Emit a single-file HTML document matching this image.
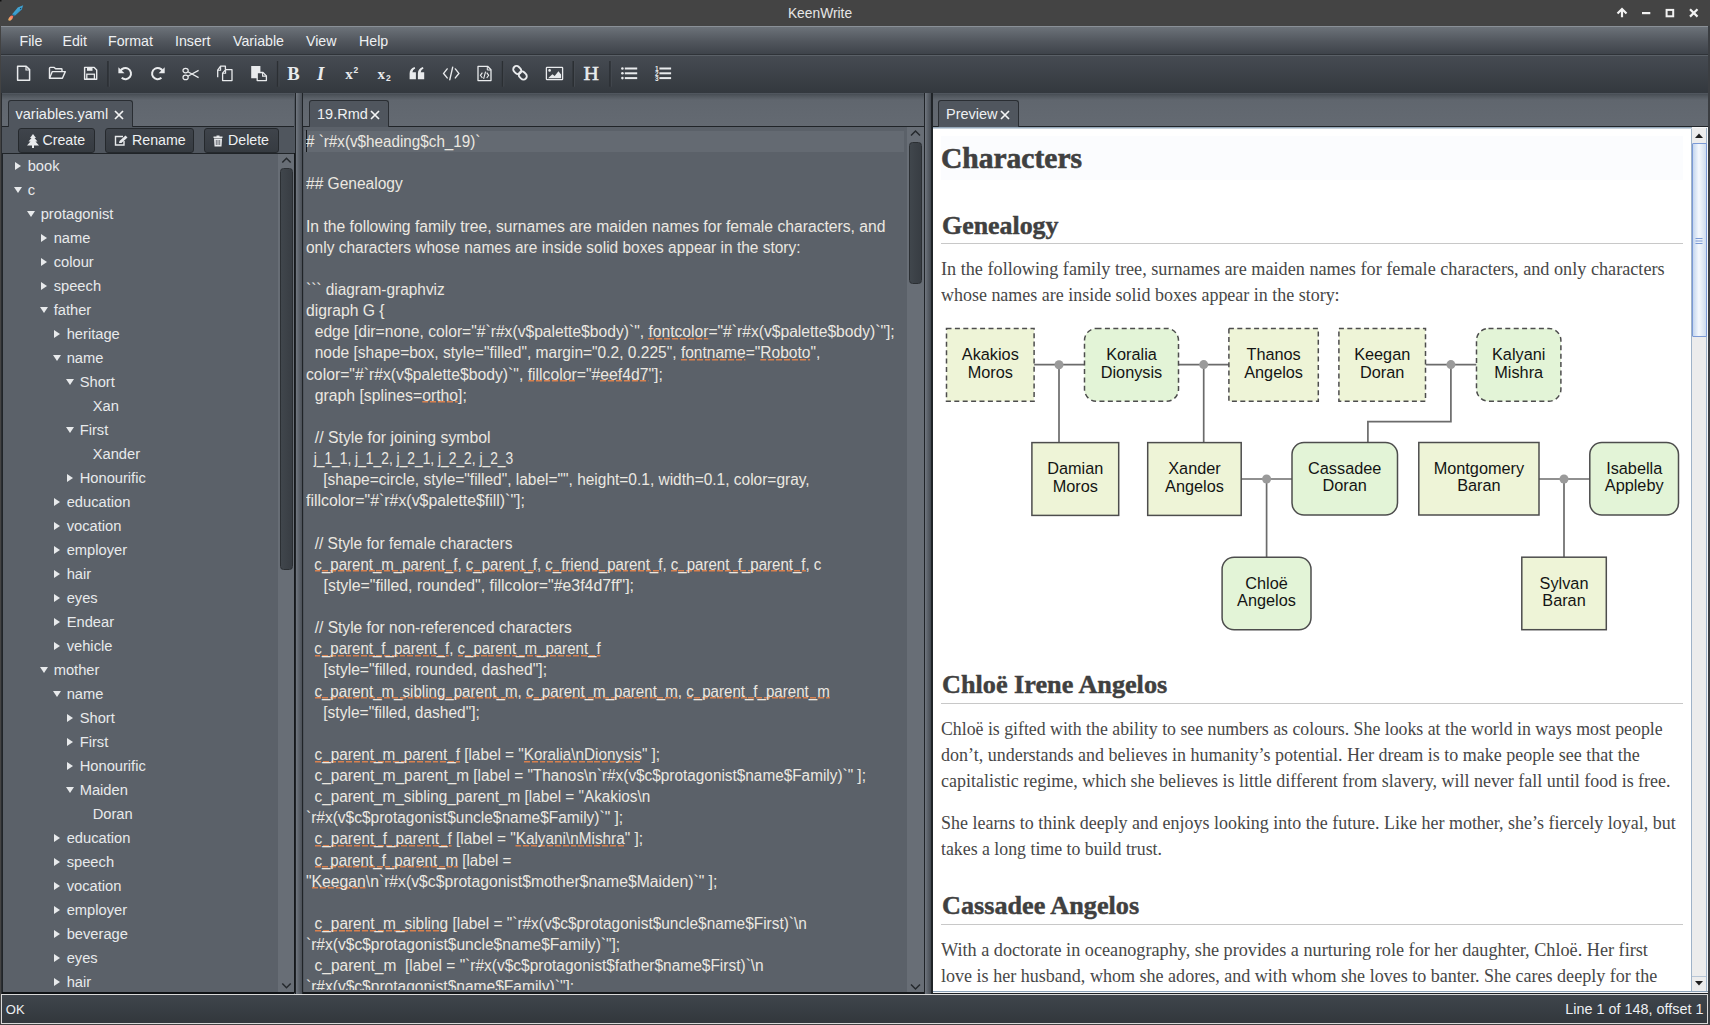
<!DOCTYPE html>
<html><head><meta charset="utf-8">
<style>
*{margin:0;padding:0;box-sizing:border-box}
html,body{width:1710px;height:1025px;overflow:hidden;background:#434343;font-family:"Liberation Sans",sans-serif}
.a{position:absolute}
#title{left:0;top:0;width:1710px;height:26px;background:#444444}
#title .t{left:0;width:1640px;top:5.5px;text-align:center;color:#e6e6e6;font-size:13.8px;line-height:16px}
#menubar{left:1px;top:26px;width:1707px;height:29px;background:linear-gradient(#8a9097 0px,#8a9097 1px,#6b7178 1.5px,#52575e 15px,#3e434a 28px);border-bottom:1px solid #2f3338}
#menubar span{position:absolute;top:7px;color:#eef0f2;font-size:14.2px;line-height:16px}
#toolbar{left:1px;top:55px;width:1707px;height:39px;background:linear-gradient(#464b52,#33383e);border-top:1px solid #5a6067;border-bottom:1px solid #1e2125}
.sep{position:absolute;top:6px;width:2px;height:26px;background:#2c3035;border-right:1px solid #4a4f55}
.ico{position:absolute}
/* panes */
.hdr{position:absolute;top:94px;height:33px;background:linear-gradient(#474d54 0px,#51575e 2px,#60666e 6px,#646a72 33px)}
.tab{position:absolute;top:100px;height:27px;background:#50565e;border:1.5px solid #2a2e33;border-bottom:none;border-radius:3px 3px 0 0;color:#eef0f2;font-size:14.5px;line-height:16px}
.tab .tx{position:absolute;top:5px;left:7px;white-space:nowrap}
.tab .x{position:absolute;top:8.6px;width:10px;height:10px}
#status{left:1px;top:994px;width:1707px;height:30px;background:linear-gradient(#3f454c,#32373c);border:1px solid #d9d9d9}
#status span{position:absolute;top:6px;color:#eef0f2;font-size:14.4px;line-height:16px}

.pane{position:absolute;top:93px;background:#50565e}
.split{position:absolute;top:93px;height:901px;width:7px;background:linear-gradient(90deg,#717780,#5d636b 40%,#454a51)}
.bdr{position:absolute;background:#202428}
.btn{position:absolute;top:127.5px;height:25px;background:linear-gradient(#3f444b,#363b41);border:1px solid #25292d;border-radius:3px;color:#eef0f2;font-size:14.2px;line-height:16px}
.btn span{position:absolute;top:3px;white-space:nowrap}
.tree{position:absolute;left:3px;top:154px;width:291px;height:838px;background:#5b6169}
.tree div{position:absolute;color:#e8eaec;font-size:14.7px;line-height:16px;white-space:nowrap}
.tri-r{position:absolute;width:0;height:0;border-left:6.4px solid #e8eaec;border-top:4.7px solid transparent;border-bottom:4.7px solid transparent}
.tri-d{position:absolute;width:0;height:0;border-top:6.4px solid #e8eaec;border-left:4.6px solid transparent;border-right:4.6px solid transparent}
.sbtrack{position:absolute;background:#646a72}
.sbthumb{position:absolute;background:linear-gradient(90deg,#3a3f45,#454a51 50%,#3a3f45);border:1px solid #2a2e32;border-radius:4px}
#editor div{position:absolute;left:2px;transform-origin:0 0;white-space:pre;color:#ebe8e1;font-size:15.6px;line-height:20px}
#editor u{text-decoration:none;background:repeating-linear-gradient(90deg,#d8804e 0 6px,transparent 6px 8px) 0 calc(100% - 0.9px)/100% 1.5px no-repeat}
#preview .h1,#preview .h2,#preview .p{position:absolute;white-space:nowrap;transform-origin:0 0;font-family:"Liberation Serif",serif;color:#404040}
#preview .h1{font-size:29px;font-weight:bold;line-height:34.8px;-webkit-text-stroke:0.6px #404040}
#preview .h2{font-size:26px;font-weight:bold;line-height:31.2px;-webkit-text-stroke:0.45px #404040}
#preview .p{font-size:18px;line-height:21.6px;color:#474747}
#preview svg text{font-family:"Liberation Sans",sans-serif;font-size:16.3px;fill:#141414}
</style></head><body>
<div id="title" class="a"><div class="a t">KeenWrite</div></div>
<div id="menubar" class="a">
<span style="left:18.5px">File</span><span style="left:61.5px">Edit</span><span style="left:107px">Format</span><span style="left:174px">Insert</span><span style="left:232px">Variable</span><span style="left:305px">View</span><span style="left:358px">Help</span>
</div>
<div id="toolbar" class="a"></div><svg class="a" style="left:0;top:55px" width="700" height="38" viewBox="0 55 700 38"><rect x="107.2" y="61" width="1.6" height="25.7" fill="#2b2f33"/><rect x="108.8" y="61" width="0.8" height="25.7" fill="#484d53"/><rect x="276.9" y="61" width="1.6" height="25.7" fill="#2b2f33"/><rect x="278.5" y="61" width="0.8" height="25.7" fill="#484d53"/><rect x="501.8" y="61" width="1.6" height="25.7" fill="#2b2f33"/><rect x="503.40000000000003" y="61" width="0.8" height="25.7" fill="#484d53"/><rect x="572.5" y="61" width="1.6" height="25.7" fill="#2b2f33"/><rect x="574.0999999999999" y="61" width="0.8" height="25.7" fill="#484d53"/><rect x="609.2" y="61" width="1.6" height="25.7" fill="#2b2f33"/><rect x="610.8" y="61" width="0.8" height="25.7" fill="#484d53"/><path d="M17.6 66.2H26.2L29.6 69.6V80.3H17.6Z" stroke="#e9ebed" fill="none" stroke-width="1.5" stroke-linejoin="round"/><path d="M26 66.2V70H29.6" stroke="#e9ebed" fill="none" stroke-width="1.2"/><path d="M49.5 78.3V68.2Q49.5 67.4 50.3 67.4H54.2L55.6 68.8H61.3Q62 68.8 62 69.5V71.4" stroke="#e9ebed" fill="none" stroke-width="1.4" stroke-linejoin="round"/><path d="M49.5 78.3L52.3 71.6H65.3L62.4 78.3Z" stroke="#e9ebed" fill="none" stroke-width="1.4" stroke-linejoin="round"/><path d="M84.6 67.4H94.2L96.7 69.9V79.3H84.6Z" stroke="#e9ebed" fill="none" stroke-width="1.4" stroke-linejoin="round"/><rect x="87" y="67.4" width="5.5" height="3.4" fill="#e9ebed"/><rect x="86.8" y="74.2" width="7.6" height="5" stroke="#e9ebed" fill="none" stroke-width="1.3"/><path d="M120.3 71.3A5.6 5.6 0 1 1 121.7 77.8" stroke="#e9ebed" fill="none" stroke-width="2"/><path d="M118.4 67.2V73.3H124.5Z" fill="#e9ebed"/><path d="M162.8 71.3A5.6 5.6 0 1 0 161.4 77.8" stroke="#e9ebed" fill="none" stroke-width="2"/><path d="M164.7 67.2V73.3H158.6Z" fill="#e9ebed"/><ellipse cx="185.6" cy="70.6" rx="2.6" ry="2.2" stroke="#e9ebed" fill="none" stroke-width="1.2"/><ellipse cx="185.6" cy="77.4" rx="2.6" ry="2.2" stroke="#e9ebed" fill="none" stroke-width="1.2"/><path d="M187.8 71.8L198.6 77.6M187.8 76.2L198.6 70.4" stroke="#e9ebed" fill="none" stroke-width="1.2"/><path d="M217.7 77.3V70.2L220.6 66.2H225.4V69.2" stroke="#e9ebed" fill="none" stroke-width="1.3" stroke-linejoin="round"/><path d="M217.7 70.2H220.6V66.2" stroke="#e9ebed" fill="none" stroke-width="1.1"/><path d="M222.6 80.6V73.2L225.6 69.7H232V80.6Z" stroke="#e9ebed" fill="none" stroke-width="1.3" stroke-linejoin="round"/><path d="M222.6 73.2H225.6V69.7" stroke="#e9ebed" fill="none" stroke-width="1.1"/><path d="M251.2 66H260.4V72.5H257.2V78.3H251.2Z" fill="#e9ebed"/><path d="M257.2 80.6V72.5H263L266.4 75.9V80.6Z" stroke="#e9ebed" fill="none" stroke-width="1.3" stroke-linejoin="round"/><path d="M262.6 72.5V76.1H266.4" stroke="#e9ebed" fill="none" stroke-width="1.1"/><text x="287.3" y="79.9" font-family="Liberation Serif" font-weight="bold" font-size="18.6" fill="#e9ebed">B</text><text x="317" y="79.9" font-family="Liberation Serif" font-style="italic" font-weight="bold" font-size="18.6" fill="#e9ebed">I</text><text x="583.6" y="80" font-family="Liberation Serif" font-size="19.5" font-weight="normal" stroke="#e9ebed" stroke-width="0.5" fill="#e9ebed" textLength="15.4" lengthAdjust="spacingAndGlyphs">H</text><text x="345.3" y="79.3" font-family="Liberation Serif" font-weight="bold" font-size="15" fill="#e9ebed">x</text><text x="353.6" y="73.2" font-family="Liberation Sans" font-weight="bold" font-size="8.5" fill="#e9ebed">2</text><text x="377.6" y="78.8" font-family="Liberation Serif" font-weight="bold" font-size="15" fill="#e9ebed">x</text><text x="386" y="81.3" font-family="Liberation Sans" font-weight="bold" font-size="8.5" fill="#e9ebed">2</text><path d="M409.6 79.2V73.6Q409.6 68.6 414.6 67.1L415.2 68.5Q412.6 69.6 412.4 72.3H415.9V79.2Z" fill="#e9ebed"/><path d="M417.9 79.2V73.6Q417.9 68.6 422.9 67.1L423.5 68.5Q420.9 69.6 420.7 72.3H424.2V79.2Z" fill="#e9ebed"/><path d="M447.2 68.9L443.6 73.4L447.2 77.9M455.3 68.9L458.9 73.4L455.3 77.9M452.7 67.2L449.8 79.7" stroke="#e9ebed" fill="none" stroke-width="1.4" stroke-linecap="round"/><path d="M478 66.3H487.6L491 69.7V80.6H478Z" stroke="#e9ebed" fill="none" stroke-width="1.3" stroke-linejoin="round"/><path d="M487.3 66.3V70H491" stroke="#e9ebed" fill="none" stroke-width="1"/><path d="M482.4 72.6L480.4 75.3L482.4 78M486.7 72.6L488.7 75.3L486.7 78M485.6 71.7L483.6 78.9" stroke="#e9ebed" fill="none" stroke-width="1.1"/><g transform="rotate(-45 520 72.8)"><rect x="516.7" y="64.6" width="6.6" height="8.6" rx="3.3" stroke="#e9ebed" fill="none" stroke-width="1.9"/><rect x="516.7" y="72.4" width="6.6" height="8.6" rx="3.3" stroke="#e9ebed" fill="none" stroke-width="1.9"/></g><rect x="546.4" y="67.3" width="16.2" height="12.3" rx="0.6" stroke="#e9ebed" fill="none" stroke-width="1.3"/><circle cx="549.6" cy="70.4" r="1.3" fill="#e9ebed"/><path d="M548 78.2L552.4 74.3L554.7 76L558.4 71.3L561.1 74.6V78.2Z" fill="#e9ebed"/><circle cx="622.4" cy="68.5" r="1.3" fill="#e9ebed"/><rect x="624.8" y="67.5" width="12.4" height="2" fill="#e9ebed"/><circle cx="622.4" cy="73.3" r="1.3" fill="#e9ebed"/><rect x="624.8" y="72.3" width="12.4" height="2" fill="#e9ebed"/><circle cx="622.4" cy="78.1" r="1.3" fill="#e9ebed"/><rect x="624.8" y="77.1" width="12.4" height="2" fill="#e9ebed"/><text x="655" y="71.3" font-family="Liberation Sans" font-weight="bold" font-size="6.5" fill="#e9ebed">1</text><rect x="659.4" y="67.5" width="11.7" height="2" fill="#e9ebed"/><text x="655" y="76.1" font-family="Liberation Sans" font-weight="bold" font-size="6.5" fill="#e9ebed">2</text><rect x="659.4" y="72.3" width="11.7" height="2" fill="#e9ebed"/><text x="655" y="80.89999999999999" font-family="Liberation Sans" font-weight="bold" font-size="6.5" fill="#e9ebed">3</text><rect x="659.4" y="77.1" width="11.7" height="2" fill="#e9ebed"/></svg>

<!-- left pane -->
<div class="pane" style="left:1px;width:295px;height:901px"></div>
<div class="hdr" style="left:2px;width:292px"></div>
<div class="bdr" style="left:2px;top:126px;width:292px;height:1px"></div>
<div class="tab" style="left:8px;width:125px"><span class="tx" style="left:6.5px">variables.yaml</span><svg class="x" style="left:105px" viewBox="0 0 10 10"><path d="M1 1L9 9M9 1L1 9" stroke="#f4f4f4" stroke-width="1.7"/></svg></div>
<div class="btn" style="left:18px;width:77px"><svg style="position:absolute;left:8px;top:5px" width="12" height="14" viewBox="0 0 12 14"><path d="M6 0L9 4H7.5L10.5 7.5H8.5L12 11.5H7V14H5V11.5H0L3.5 7.5H1.5L4.5 4H3Z" fill="#e8eaec"/></svg><span style="left:23.5px">Create</span></div>
<div class="btn" style="left:105px;width:89px"><svg style="position:absolute;left:8px;top:6.5px" width="14" height="11" viewBox="0 0 14 11"><path d="M9 1.5H1.5V10H10V6" fill="none" stroke="#e8eaec" stroke-width="1.4"/><path d="M5 8L5.5 6L11.5 0.5L13.5 2.5L7.5 8Z" fill="#e8eaec"/></svg><span style="left:26px">Rename</span></div>
<div class="btn" style="left:204px;width:75px"><svg style="position:absolute;left:8px;top:6px" width="10" height="12" viewBox="0 0 10 12"><path d="M3.5 0.5H6.5V1.5H9.5V3H0.5V1.5H3.5Z" fill="#e8eaec"/><path d="M1 3.5H9L8.5 11.5H1.5Z" fill="#e8eaec"/><path d="M3.3 5V10M5 5V10M6.7 5V10" stroke="#50565e" stroke-width="0.8"/></svg><span style="left:23px">Delete</span></div>
<div class="bdr" style="left:2px;top:152.8px;width:292px;height:1.4px"></div>
<div class="bdr" style="left:1px;top:93px;width:1px;height:901px;background:#2a2d31"></div>
<div class="bdr" style="left:2px;top:153px;width:1px;height:840px"></div>
<div class="bdr" style="left:294.6px;top:93px;width:1.4px;height:901px"></div>
<div class="bdr" style="left:293.9px;top:153px;width:1px;height:840px;background:#15181b"></div>
<div class="bdr" style="left:2px;top:991.5px;width:292px;height:2.5px;background:#0f1215"></div>
<div class="tree" id="tree"><i class="tri-r" style="left:11.9px;top:8.0px"></i>
<div style="left:24.7px;top:4.1px">book</div>
<i class="tri-d" style="left:10.6px;top:33.1px"></i>
<div style="left:24.7px;top:28.1px">c</div>
<i class="tri-d" style="left:23.6px;top:57.1px"></i>
<div style="left:37.7px;top:52.1px">protagonist</div>
<i class="tri-r" style="left:37.9px;top:80.0px"></i>
<div style="left:50.7px;top:76.1px">name</div>
<i class="tri-r" style="left:37.9px;top:104.0px"></i>
<div style="left:50.7px;top:100.1px">colour</div>
<i class="tri-r" style="left:37.9px;top:128.0px"></i>
<div style="left:50.7px;top:124.1px">speech</div>
<i class="tri-d" style="left:36.6px;top:153.1px"></i>
<div style="left:50.7px;top:148.1px">father</div>
<i class="tri-r" style="left:50.9px;top:176.0px"></i>
<div style="left:63.7px;top:172.1px">heritage</div>
<i class="tri-d" style="left:49.6px;top:201.1px"></i>
<div style="left:63.7px;top:196.1px">name</div>
<i class="tri-d" style="left:62.6px;top:225.1px"></i>
<div style="left:76.7px;top:220.1px">Short</div>
<div style="left:89.7px;top:244.1px">Xan</div>
<i class="tri-d" style="left:62.6px;top:273.1px"></i>
<div style="left:76.7px;top:268.1px">First</div>
<div style="left:89.7px;top:292.1px">Xander</div>
<i class="tri-r" style="left:63.9px;top:320.0px"></i>
<div style="left:76.7px;top:316.1px">Honourific</div>
<i class="tri-r" style="left:50.9px;top:344.0px"></i>
<div style="left:63.7px;top:340.1px">education</div>
<i class="tri-r" style="left:50.9px;top:368.0px"></i>
<div style="left:63.7px;top:364.1px">vocation</div>
<i class="tri-r" style="left:50.9px;top:392.0px"></i>
<div style="left:63.7px;top:388.1px">employer</div>
<i class="tri-r" style="left:50.9px;top:416.0px"></i>
<div style="left:63.7px;top:412.1px">hair</div>
<i class="tri-r" style="left:50.9px;top:440.0px"></i>
<div style="left:63.7px;top:436.1px">eyes</div>
<i class="tri-r" style="left:50.9px;top:464.0px"></i>
<div style="left:63.7px;top:460.1px">Endear</div>
<i class="tri-r" style="left:50.9px;top:488.0px"></i>
<div style="left:63.7px;top:484.1px">vehicle</div>
<i class="tri-d" style="left:36.6px;top:513.1px"></i>
<div style="left:50.7px;top:508.1px">mother</div>
<i class="tri-d" style="left:49.6px;top:537.1px"></i>
<div style="left:63.7px;top:532.1px">name</div>
<i class="tri-r" style="left:63.9px;top:560.0px"></i>
<div style="left:76.7px;top:556.1px">Short</div>
<i class="tri-r" style="left:63.9px;top:584.0px"></i>
<div style="left:76.7px;top:580.1px">First</div>
<i class="tri-r" style="left:63.9px;top:608.0px"></i>
<div style="left:76.7px;top:604.1px">Honourific</div>
<i class="tri-d" style="left:62.6px;top:633.1px"></i>
<div style="left:76.7px;top:628.1px">Maiden</div>
<div style="left:89.7px;top:652.1px">Doran</div>
<i class="tri-r" style="left:50.9px;top:680.0px"></i>
<div style="left:63.7px;top:676.1px">education</div>
<i class="tri-r" style="left:50.9px;top:704.0px"></i>
<div style="left:63.7px;top:700.1px">speech</div>
<i class="tri-r" style="left:50.9px;top:728.0px"></i>
<div style="left:63.7px;top:724.1px">vocation</div>
<i class="tri-r" style="left:50.9px;top:752.0px"></i>
<div style="left:63.7px;top:748.1px">employer</div>
<i class="tri-r" style="left:50.9px;top:776.0px"></i>
<div style="left:63.7px;top:772.1px">beverage</div>
<i class="tri-r" style="left:50.9px;top:800.0px"></i>
<div style="left:63.7px;top:796.1px">eyes</div>
<i class="tri-r" style="left:50.9px;top:824.0px"></i>
<div style="left:63.7px;top:820.1px">hair</div></div>
<div class="split" style="left:296px"></div>
<!-- editor pane -->
<div class="pane" style="left:302px;width:623px;height:901px"></div>
<div class="hdr" style="left:303px;width:621px"></div>
<div class="bdr" style="left:303px;top:126px;width:621px;height:1px"></div>
<div class="tab" style="left:309px;width:80px"><span class="tx">19.Rmd</span><svg class="x" style="left:60px" viewBox="0 0 10 10"><path d="M1 1L9 9M9 1L1 9" stroke="#f4f4f4" stroke-width="1.7"/></svg></div>
<div class="bdr" style="left:301.8px;top:93px;width:1.3px;height:901px"></div>
<div class="bdr" style="left:924px;top:93px;width:1.5px;height:901px"></div>
<div class="editor" id="editor" style="position:absolute;left:303.5px;top:127px;width:620.5px;height:863px;background:#5b6169;overflow:hidden"><i class="a" style="left:0;top:3.8px;width:600.5px;height:21px;background:#646a72"></i>
<i class="a" style="left:2.4px;top:3.1px;width:1.5px;height:22px;background:#15181b"></i>
<div style="top:5.19px;transform:scaleX(0.9768)"># `r#x(v$heading$ch_19)`</div>
<div style="top:47.45px;transform:scaleX(0.9965)">## Genealogy</div>
<div style="top:89.71px;transform:scaleX(1.0054)">In the following family tree, surnames are maiden names for female characters, and</div>
<div style="top:110.84px;transform:scaleX(0.9922)">only characters whose names are inside solid boxes appear in the story:</div>
<div style="top:153.10px;transform:scaleX(0.9883)">``` diagram-graphviz</div>
<div style="top:174.23px;transform:scaleX(1.0070)">digraph G {</div>
<div style="top:195.36px;transform:scaleX(1.0031)">  edge [dir=none, color="#`r#x(v$palette$body)`", <u>fontcolor</u>="#`r#x(v$palette$body)`"];</div>
<div style="top:216.49px;transform:scaleX(0.9963)">  node [shape=box, style="filled", margin="0.2, 0.225", <u>fontname</u>="<u>Roboto</u>",</div>
<div style="top:237.62px;transform:scaleX(1.0099)">color="#`r#x(v$palette$body)`", <u>fillcolor</u>="#<u>eef4d7</u>"];</div>
<div style="top:258.75px;transform:scaleX(1.0111)">  graph [splines=<u>ortho</u>];</div>
<div style="top:301.01px;transform:scaleX(1.0144)">  // Style for joining symbol</div>
<div style="top:322.14px;transform:scaleX(0.8852)">  j_1_1, j_1_2, j_2_1, j_2_2, j_2_3</div>
<div style="top:343.27px;transform:scaleX(0.9929)">    [shape=circle, style="filled", label="", height=0.1, width=0.1, color=gray,</div>
<div style="top:364.40px;transform:scaleX(1.0170)">fillcolor="#`r#x(v$palette$fill)`"];</div>
<div style="top:406.66px;transform:scaleX(0.9966)">  // Style for female characters</div>
<div style="top:427.79px;transform:scaleX(0.9650)">  <u>c_parent_m_parent_f</u>, <u>c_parent_f</u>, <u>c_friend_parent_f</u>, <u>c_parent_f_parent_f</u>, c</div>
<div style="top:448.92px;transform:scaleX(1.0165)">    [style="filled, rounded", fillcolor="#e3f4d7ff"];</div>
<div style="top:491.18px;transform:scaleX(0.9985)">  // Style for non-referenced characters</div>
<div style="top:512.31px;transform:scaleX(0.9654)">  <u>c_parent_f_parent_f</u>, <u>c_parent_m_parent_f</u></div>
<div style="top:533.44px;transform:scaleX(1.0027)">    [style="filled, rounded, dashed"];</div>
<div style="top:554.57px;transform:scaleX(0.9682)">  <u>c_parent_m_sibling_parent_m</u>, <u>c_parent_m_parent_m</u>, <u>c_parent_f_parent_m</u></div>
<div style="top:575.70px;transform:scaleX(0.9969)">    [style="filled, dashed"];</div>
<div style="top:617.96px;transform:scaleX(0.9812)">  <u>c_parent_m_parent_f</u> [label = "<u>Koralia\nDionysis</u>" ];</div>
<div style="top:639.09px;transform:scaleX(0.9843)">  c_parent_m_parent_m [label = "Thanos\n`r#x(v$c$protagonist$name$Family)`" ];</div>
<div style="top:660.22px;transform:scaleX(0.9809)">  c_parent_m_sibling_parent_m [label = "Akakios\n</div>
<div style="top:681.35px;transform:scaleX(0.9931)">`r#x(v$c$protagonist$uncle$name$Family)`" ];</div>
<div style="top:702.48px;transform:scaleX(0.9834)">  <u>c_parent_f_parent_f</u> [label = "<u>Kalyani\nMishra</u>" ];</div>
<div style="top:723.61px;transform:scaleX(0.9692)">  <u>c_parent_f_parent_m</u> [label =</div>
<div style="top:744.74px;transform:scaleX(1.0080)">"<u>Keegan</u>\n`r#x(v$c$protagonist$mother$name$Maiden)`" ];</div>
<div style="top:787.00px;transform:scaleX(0.9878)">  <u>c_parent_m_sibling</u> [label = "`r#x(v$c$protagonist$uncle$name$First)`\n</div>
<div style="top:808.13px;transform:scaleX(0.9975)">`r#x(v$c$protagonist$uncle$name$Family)`"];</div>
<div style="top:829.26px;transform:scaleX(0.9929)">  c_parent_m  [label = "`r#x(v$c$protagonist$father$name$First)`\n</div>
<div style="top:850.39px;transform:scaleX(0.9966)">`r#x(v$c$protagonist$name$Family)`"];</div></div>
<div class="a" style="left:303.5px;top:990px;width:620.5px;height:2px;background:#5b6169"></div>
<div class="bdr" style="left:303px;top:992px;width:621px;height:1.5px;background:#15181b"></div>
<div class="split" style="left:925px;width:6px"></div>
<!-- preview pane -->
<div class="pane" style="left:931px;width:777px;height:901px"></div>
<div class="hdr" style="left:932px;width:776px"></div>
<div class="bdr" style="left:932px;top:126px;width:776px;height:1px"></div>
<div class="tab" style="left:938px;width:81px"><span class="tx">Preview</span><svg class="x" style="left:61px" viewBox="0 0 10 10"><path d="M1 1L9 9M9 1L1 9" stroke="#f4f4f4" stroke-width="1.7"/></svg></div>
<div class="bdr" style="left:931px;top:93px;width:1.5px;height:901px"></div>
<div id="preview" style="position:absolute;left:932.5px;top:127px;width:759px;height:865px;background:#fff;overflow:hidden"><div class="a" style="left:8.5px;top:9px;width:742px;height:44px;background:#fbfcfe"></div>
<div class="h1" style="left:8.1px;top:14.21px;transform:scaleX(1.0180)">Characters</div>
<div class="h2" style="left:9.0px;top:82.93px;transform:scaleX(0.9958)">Genealogy</div>
<div class="a" style="left:8.5px;top:116px;width:742px;height:1px;background:#c8c8c8"></div>
<div class="p" style="left:8.5px;top:131.93px;transform:scaleX(1.0111)">In the following family tree, surnames are maiden names for female characters, and only characters</div>
<div class="p" style="left:8.5px;top:158.12px;transform:scaleX(0.9980)">whose names are inside solid boxes appear in the story:</div>
<div class="h2" style="left:9.0px;top:542.42px;transform:scaleX(1.0080)">Chlo&euml; Irene Angelos</div>
<div class="a" style="left:8.5px;top:576px;width:742px;height:1px;background:#c8c8c8"></div>
<div class="p" style="left:8.5px;top:591.92px;transform:scaleX(0.9873)">Chlo&euml; is gifted with the ability to see numbers as colours. She looks at the world in ways most people</div>
<div class="p" style="left:8.5px;top:617.92px;transform:scaleX(0.9996)">don&rsquo;t, understands and believes in humanity&rsquo;s potential. Her dream is to make people see that the</div>
<div class="p" style="left:8.5px;top:643.92px;transform:scaleX(0.9983)">capitalistic regime, which she believes is little different from slavery, will never fall until food is free.</div>
<div class="p" style="left:8.5px;top:685.52px;transform:scaleX(0.9981)">She learns to think deeply and enjoys looking into the future. Like her mother, she&rsquo;s fiercely loyal, but</div>
<div class="p" style="left:8.5px;top:711.52px;transform:scaleX(0.9889)">takes a long time to build trust.</div>
<div class="h2" style="left:9.0px;top:763.12px;transform:scaleX(1.0070)">Cassadee Angelos</div>
<div class="a" style="left:8.5px;top:797px;width:742px;height:1px;background:#c8c8c8"></div>
<div class="p" style="left:8.5px;top:813.42px;transform:scaleX(1.0111)">With a doctorate in oceanography, she provides a nurturing role for her daughter, Chlo&euml;. Her first</div>
<div class="p" style="left:8.5px;top:839.42px;transform:scaleX(1.0028)">love is her husband, whom she adores, and with whom she loves to banter. She cares deeply for the</div>
<svg class="a" style="left:0;top:0" width="759" height="865" viewBox="932.5 127 759 865">
<path d="M1033.6 364.7H1084" stroke="#6b6b6b" stroke-width="1.7" fill="none"/>
<path d="M1178 364.6H1228.4" stroke="#6b6b6b" stroke-width="1.7" fill="none"/>
<path d="M1425 364.6H1476" stroke="#6b6b6b" stroke-width="1.7" fill="none"/>
<path d="M1058.5 364.7V442.6" stroke="#6b6b6b" stroke-width="1.7" fill="none"/>
<path d="M1203.2 364.6V442.6" stroke="#6b6b6b" stroke-width="1.7" fill="none"/>
<path d="M1450.4 364.6V421.6H1367.4V442.5" stroke="#6b6b6b" stroke-width="1.7" fill="none"/>
<path d="M1240.7 479H1291.5" stroke="#6b6b6b" stroke-width="1.7" fill="none"/>
<path d="M1266.1 479V557.2" stroke="#6b6b6b" stroke-width="1.7" fill="none"/>
<path d="M1538.5 479H1589.3" stroke="#6b6b6b" stroke-width="1.7" fill="none"/>
<path d="M1563.5 479V557.2" stroke="#6b6b6b" stroke-width="1.7" fill="none"/>
<circle cx="1058.5" cy="364.7" r="4.5" fill="#9a9a9a"/>
<circle cx="1203.2" cy="364.6" r="4.5" fill="#9a9a9a"/>
<circle cx="1450.4" cy="364.6" r="4.5" fill="#9a9a9a"/>
<circle cx="1266.1" cy="479" r="4.5" fill="#9a9a9a"/>
<circle cx="1563.5" cy="479" r="4.5" fill="#9a9a9a"/>
<rect x="946" y="328.4" width="87.6" height="72.8" rx="0" fill="#eef4d7" stroke="#4d4d4d" stroke-width="1.5" stroke-dasharray="5 3.4"/>
<text x="989.8" y="360.2" text-anchor="middle">Akakios</text>
<text x="989.8" y="377.5" text-anchor="middle">Moros</text>
<rect x="1084" y="328.4" width="94.0" height="72.9" rx="12" fill="#e3f4d7" stroke="#4d4d4d" stroke-width="1.5" stroke-dasharray="5 3.4"/>
<text x="1131.0" y="360.2" text-anchor="middle">Koralia</text>
<text x="1131.0" y="377.6" text-anchor="middle">Dionysis</text>
<rect x="1228.4" y="328.4" width="89.4" height="72.8" rx="0" fill="#eef4d7" stroke="#4d4d4d" stroke-width="1.5" stroke-dasharray="5 3.4"/>
<text x="1273.1" y="360.2" text-anchor="middle">Thanos</text>
<text x="1273.1" y="377.5" text-anchor="middle">Angelos</text>
<rect x="1338.4" y="328.4" width="86.6" height="72.8" rx="0" fill="#eef4d7" stroke="#4d4d4d" stroke-width="1.5" stroke-dasharray="5 3.4"/>
<text x="1381.7" y="360.2" text-anchor="middle">Keegan</text>
<text x="1381.7" y="377.5" text-anchor="middle">Doran</text>
<rect x="1476" y="328.4" width="84.4" height="72.8" rx="12" fill="#e3f4d7" stroke="#4d4d4d" stroke-width="1.5" stroke-dasharray="5 3.4"/>
<text x="1518.2" y="360.2" text-anchor="middle">Kalyani</text>
<text x="1518.2" y="377.5" text-anchor="middle">Mishra</text>
<rect x="1031.4" y="442.6" width="86.8" height="72.8" rx="0" fill="#eef4d7" stroke="#4d4d4d" stroke-width="1.5"/>
<text x="1074.8" y="474.4" text-anchor="middle">Damian</text>
<text x="1074.8" y="491.7" text-anchor="middle">Moros</text>
<rect x="1147.2" y="442.6" width="93.5" height="72.8" rx="0" fill="#eef4d7" stroke="#4d4d4d" stroke-width="1.5"/>
<text x="1194.0" y="474.4" text-anchor="middle">Xander</text>
<text x="1194.0" y="491.7" text-anchor="middle">Angelos</text>
<rect x="1291.5" y="442.5" width="105.5" height="72.5" rx="12" fill="#e3f4d7" stroke="#4d4d4d" stroke-width="1.5"/>
<text x="1344.2" y="474.1" text-anchor="middle">Cassadee</text>
<text x="1344.2" y="491.4" text-anchor="middle">Doran</text>
<rect x="1418.3" y="442.5" width="120.2" height="72.5" rx="0" fill="#eef4d7" stroke="#4d4d4d" stroke-width="1.5"/>
<text x="1478.4" y="474.1" text-anchor="middle">Montgomery</text>
<text x="1478.4" y="491.4" text-anchor="middle">Baran</text>
<rect x="1589.3" y="442.5" width="88.7" height="72.5" rx="12" fill="#e3f4d7" stroke="#4d4d4d" stroke-width="1.5"/>
<text x="1633.7" y="474.1" text-anchor="middle">Isabella</text>
<text x="1633.7" y="491.4" text-anchor="middle">Appleby</text>
<rect x="1221.6" y="557.2" width="88.9" height="72.5" rx="12" fill="#e3f4d7" stroke="#4d4d4d" stroke-width="1.5"/>
<text x="1266.0" y="588.9" text-anchor="middle">Chlo&#235;</text>
<text x="1266.0" y="606.2" text-anchor="middle">Angelos</text>
<rect x="1521.3" y="557.2" width="84.5" height="72.5" rx="0" fill="#eef4d7" stroke="#4d4d4d" stroke-width="1.5"/>
<text x="1563.5" y="588.9" text-anchor="middle">Sylvan</text>
<text x="1563.5" y="606.2" text-anchor="middle">Baran</text>
</svg></div>
<div class="a" style="left:1708px;top:26px;width:2px;height:999px;background:#3b3e42"></div>
<!-- tree scrollbar -->
<div class="a" style="left:277.5px;top:154px;width:16.5px;height:837.5px;background:#686e76"></div>
<div class="a" style="left:280.2px;top:168.4px;width:12.5px;height:402px;background:linear-gradient(90deg,#40464c,#383d43);border:1px solid #2b2f33;border-radius:3.5px"></div>
<svg class="a" style="left:281px;top:156px" width="11" height="8" viewBox="0 0 11 8"><path d="M1.3 6.5L5.5 2.3L9.7 6.5" stroke="#25292d" stroke-width="1.5" fill="none"/></svg>
<svg class="a" style="left:281px;top:982px" width="11" height="8" viewBox="0 0 11 8"><path d="M1.3 1.5L5.5 5.7L9.7 1.5" stroke="#25292d" stroke-width="1.5" fill="none"/></svg>
<!-- editor scrollbar -->
<div class="a" style="left:906.8px;top:127px;width:17px;height:865px;background:#686e76"></div>
<div class="a" style="left:909px;top:142px;width:13px;height:141.5px;background:linear-gradient(90deg,#40464c,#383d43);border:1px solid #2b2f33;border-radius:3.5px"></div>
<svg class="a" style="left:910px;top:129.3px" width="11" height="8" viewBox="0 0 11 8"><path d="M1 6.5L5.5 2L10 6.5" stroke="#25292d" stroke-width="1.5" fill="none"/></svg>
<svg class="a" style="left:910px;top:982.5px" width="11" height="8" viewBox="0 0 11 8"><path d="M1 1.5L5.5 6L10 1.5" stroke="#25292d" stroke-width="1.5" fill="none"/></svg>
<div class="a" style="left:303px;top:992px;width:621px;height:1.8px;background:#15181b"></div>
<!-- preview scrollbar -->
<div class="a" style="left:1691px;top:127px;width:17px;height:866px;background:#f6f7f8"></div>
<div class="a" style="left:1691.3px;top:127.5px;width:15.5px;height:864px;background:#ececec;border-left:1px solid #9fb3c8;border-right:1px solid #9fb3c8"></div>
<div class="a" style="left:1692px;top:128px;width:14px;height:15px;background:#ededed"></div>
<svg class="a" style="left:1692px;top:130px" width="14" height="10" viewBox="0 0 14 10"><path d="M3 8L7 3.5L11 8Z" fill="#1e1e1e"/></svg>
<div class="a" style="left:1691.5px;top:143px;width:15px;height:194px;background:linear-gradient(90deg,#c4d6ee,#f4f8fd 45%,#cfdcee);border:1.5px solid #7b9ad6;border-radius:1px"></div>
<svg class="a" style="left:1692px;top:236px" width="14" height="10" viewBox="0 0 14 10"><path d="M3.5 2.5H10.5M3.5 5H10.5M3.5 7.5H10.5" stroke="#6d8fcf" stroke-width="0.9"/></svg>
<div class="a" style="left:1692px;top:975.6px;width:14px;height:15.4px;background:#ececec;border-top:1px solid #b8c6d6"></div>
<svg class="a" style="left:1692px;top:978px" width="14" height="10" viewBox="0 0 14 10"><path d="M3 3L7 7.5L11 3Z" fill="#1e1e1e"/></svg>
<div class="a" style="left:932.5px;top:991px;width:775px;height:1px;background:#8aa0b6"></div>
<div class="a" style="left:932.5px;top:992px;width:775px;height:1px;background:#f2f3f5"></div>
<div class="a" style="left:931px;top:993px;width:777px;height:1.2px;background:#1e2124"></div>
<div class="a" style="left:932.5px;top:127px;width:759px;height:1.5px;background:linear-gradient(#7d93a8,#dfe6ec)"></div>
<!-- app icon -->
<svg class="a" style="left:0;top:0" width="30" height="26" viewBox="0 0 30 26"><defs><linearGradient id="rk" x1="0" y1="0" x2="1" y2="1"><stop offset="0" stop-color="#5cc0ea"/><stop offset="1" stop-color="#1f7fb5"/></linearGradient><linearGradient id="fl" x1="1" y1="0" x2="0" y2="1"><stop offset="0" stop-color="#ff5f5a"/><stop offset="0.6" stop-color="#f9a06a"/><stop offset="1" stop-color="#c8b060"/></linearGradient></defs><path d="M23.2 5.2L21.8 9.6L15.2 15.6L12.2 14.3L17.8 7.4Z" fill="url(#rk)"/><path d="M12 14.3L14.6 13.9L14.4 16.2L15.2 17.2L13.6 15.6Z" fill="#2a8cc4"/><circle cx="20.6" cy="8.6" r="0.7" fill="#1b3b50"/><path d="M10.6 15.9Q12.6 14.9 13.3 16.6Q13 18.8 10.6 20.6Q8.6 21.2 8.1 19.8Q8.6 17.4 10.6 15.9Z" fill="url(#fl)"/><rect x="0" y="0" width="1.5" height="1.5" fill="#111"/></svg>
<!-- window controls -->
<svg class="a" style="left:1610px;top:4px" width="95" height="18" viewBox="1610 4 95 18"><path d="M1622 17.3V10M1617.5 13.6L1622 9L1626.5 13.6" stroke="#f2f2f2" stroke-width="2.2" fill="none"/><rect x="1642" y="12" width="8.3" height="2.2" fill="#f2f2f2"/><rect x="1666.6" y="9.9" width="6.6" height="6.4" stroke="#f2f2f2" stroke-width="2" fill="none"/><path d="M1690 9.3L1697.5 16.6M1697.5 9.3L1690 16.6" stroke="#f2f2f2" stroke-width="2.2"/></svg>

<div id="status" class="a"><span style="left:3.8px;font-size:13px;top:6.5px">OK</span><span style="right:3.5px">Line 1 of 148, offset 1</span></div>
</body></html>
